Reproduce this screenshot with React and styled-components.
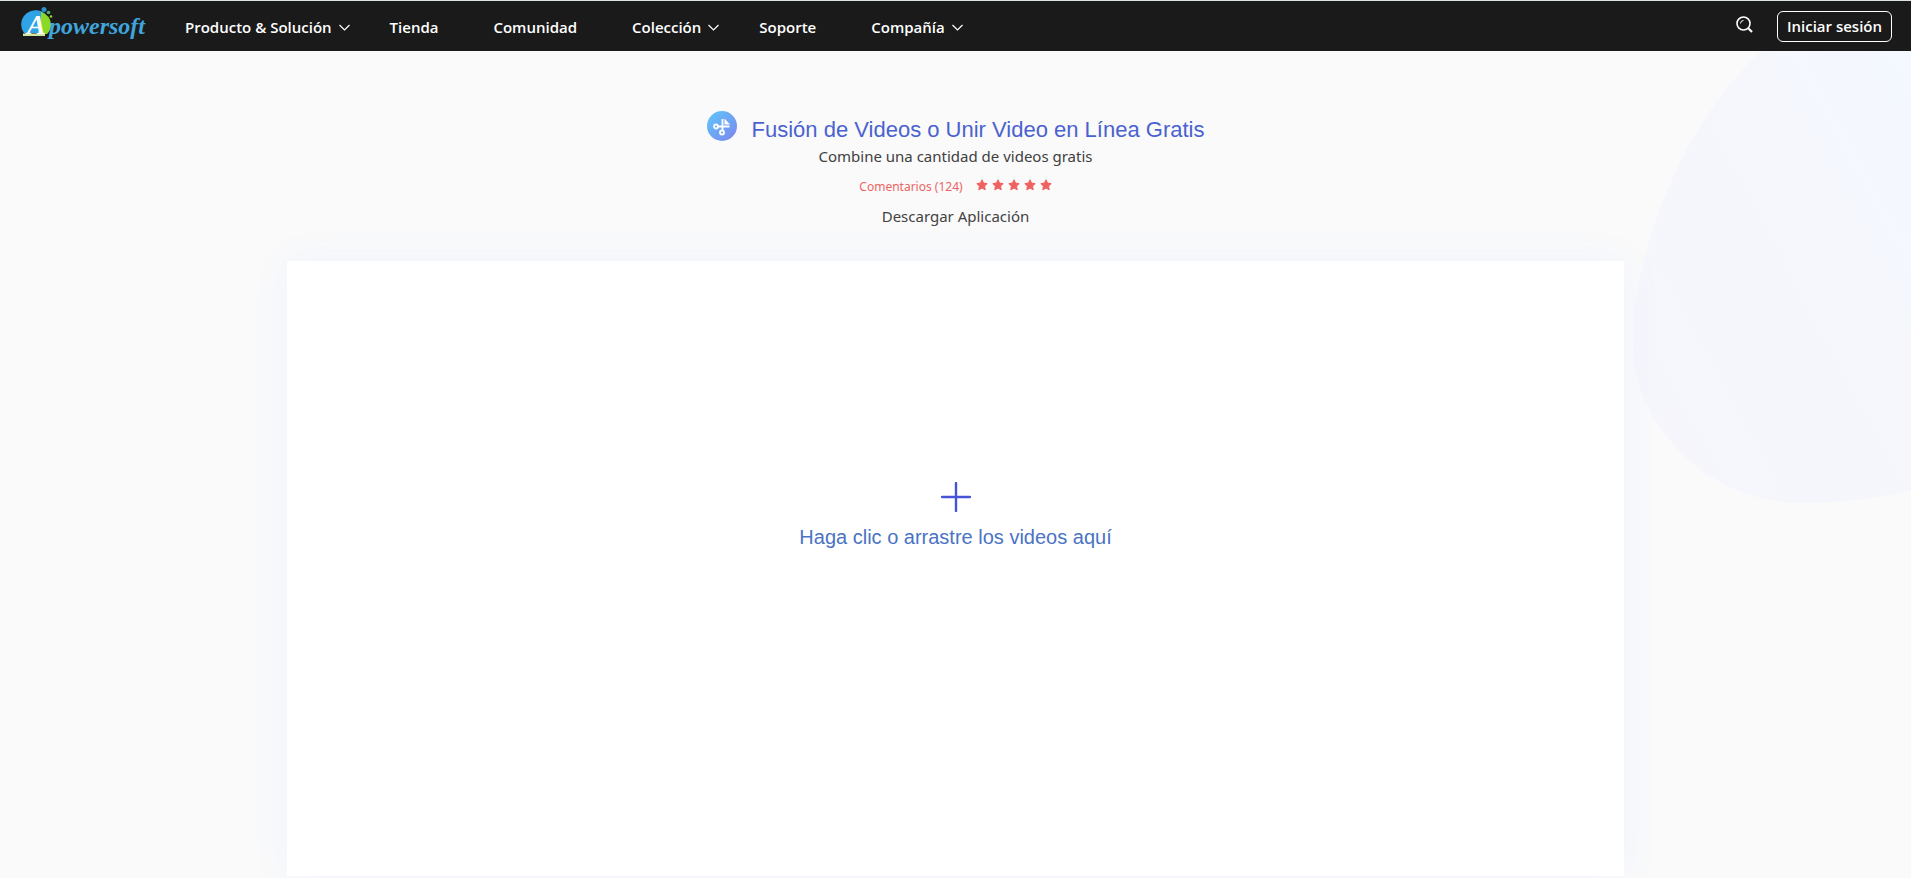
import React from 'react';
import styled, { createGlobalStyle } from 'styled-components';

const GlobalStyle = createGlobalStyle`
  *, *::before, *::after { box-sizing: border-box; }
  body {
    margin: 0;
    background: #fafafa;
    color: #404040;
    font-family: "Noto Sans", "Open Sans", sans-serif;
    font-size: 15px;
    overflow-x: hidden;
  }
`;

const Page = styled.div`
  position: relative;
  min-height: 100vh;
  overflow: hidden;
`;

const Header = styled.header`
  position: relative;
  z-index: 1;
  display: flex;
  align-items: center;
  height: 51px;
  padding: 0 19px 0 21px;
  border-top: 1px solid #dce4e1;
  background: #1a1a1a;
`;

const LogoLink = styled.a`
  display: flex;
  width: 128px;
  margin-right: 36px;
  color: #3fa5dc;
  text-decoration: none;
`;

const LogoArt = styled.svg`
  display: block;
  width: 128px;
  height: 40px;
  font-family: "Liberation Serif", serif;
  font-style: italic;
  font-weight: 700;
`;

const Nav = styled.nav`
  display: flex;
  flex: 1;
  gap: 55px;
  padding-top: 2px;
`;

const NavItem = styled.a`
  display: flex;
  align-items: center;
  gap: 7px;
  margin-right: ${(p) => (p.$menu ? '-15px' : '0')};
  color: #fff;
  font-family: "Open Sans", sans-serif;
  font-weight: 600;
  font-size: 15px;
  line-height: 24px;
  text-decoration: none;
  white-space: nowrap;
`;

const Chevron = styled.svg`
  width: 11px;
  height: 7px;
`;

const SearchButton = styled.button`
  display: flex;
  padding: 0;
  margin: 0 24px 4px 0;
  border: 0;
  background: none;
  color: #fff;
`;

const LoginButton = styled.button`
  height: 31px;
  padding: 0 9px;
  border: 1px solid #fff;
  border-radius: 6px;
  background: none;
  color: #fff;
  font-family: "Open Sans", sans-serif;
  font-weight: 600;
  font-size: 15px;
  line-height: 24px;
`;

const Backdrop = styled.svg`
  position: absolute;
  top: 0;
  right: 0;
  width: 280px;
  height: 510px;
`;

const Main = styled.main`
  position: relative;
  display: flex;
  flex-direction: column;
  align-items: center;
  padding-top: 60px;
`;

const TitleRow = styled.div`
  display: flex;
  gap: 15px;
`;

const Title = styled.h1`
  margin: 5px 0 0;
  color: #4a62d0;
  font-family: "Liberation Sans", Arial, sans-serif;
  font-weight: 400;
  font-size: 22px;
  line-height: 28px;
`;

const Subtitle = styled.p`
  margin: 0;
  font-size: 15px;
  line-height: 24px;
`;

const Reviews = styled.a`
  display: flex;
  align-items: center;
  gap: 13px;
  margin-top: 11px;
  color: #ec6464;
  font-size: 12px;
  line-height: 16px;
  text-decoration: none;
`;

const Stars = styled.span`
  display: flex;
  gap: 4px;
  margin-bottom: 4px;
`;

const DownloadLink = styled.a`
  margin-top: 9px;
  color: inherit;
  font-size: 15px;
  line-height: 24px;
  text-decoration: none;
`;

const DropZone = styled.button`
  display: flex;
  flex-direction: column;
  align-items: center;
  width: 70%;
  height: 70vh;
  margin: 33px 0;
  padding: 221px 0 0;
  border: 0;
  background: #fff;
  box-shadow: 0 0 40px #eff3ff;
  color: #4a73c4;
  font-family: "Liberation Sans", Arial, sans-serif;
  font-size: 20px;
  line-height: 24px;
`;

const DropLabel = styled.span`
  margin-top: 13px;
`;

const NAV = [
  { label: 'Producto & Solución', menu: true },
  { label: 'Tienda' },
  { label: 'Comunidad' },
  { label: 'Colección', menu: true },
  { label: 'Soporte' },
  { label: 'Compañía', menu: true },
];

function Logo() {
  return (
    <LogoArt viewBox="0 0 128 40" role="img" aria-label="Apowersoft">
      <path d="M3 27 A14 14 0 1 1 26 10 L20 27 Z" fill="#2fa3e6" />
      <path d="M20 6 Q29 9 30 18 Q30 24 26 28 H20 Z" fill="#8bd927" />
      <path d="M2 27.500 H24 V30 H2 Z" fill="#cfe6a0" />
      <circle cx="23" cy="3.500" r="2.500" fill="#2b91cf" />
      <circle cx="27.500" cy="6.500" r="1.800" fill="#4fb56e" />
      <circle cx="30" cy="10.500" r="1.300" fill="#8bd927" />
      <text x="6" y="28" fontSize="28" fill="#fff">A</text>
      <text x="28" y="28" fontSize="24" fill="#3fa5dc">powersoft</text>
    </LogoArt>
  );
}

function Star() {
  return (
    <svg width="12" height="12" viewBox="0 0 12 12" aria-hidden="true">
      <path d="M6 .8 7.600 4.100 11.200 4.600 8.600 7.100 9.200 10.800 6 9.100 2.800 10.800 3.400 7.100 .8 4.600 4.400 4.100Z" fill="#f06262" stroke="#f06262" strokeLinejoin="round" />
    </svg>
  );
}

export default function App() {
  return (
    <Page>
      <GlobalStyle />
      <Header>
        <LogoLink href="#"><Logo /></LogoLink>
        <Nav>
          {NAV.map(({ label, menu }) => (
            <NavItem key={label} href="#" $menu={menu}>
              {label}
              {menu && (
                <Chevron viewBox="0 0 11 7" aria-hidden="true">
                  <path d="M.5 1 5.500 6 10.500 1" fill="none" stroke="#fff" strokeWidth="1.200" />
                </Chevron>
              )}
            </NavItem>
          ))}
        </Nav>
        <SearchButton aria-label="Buscar">
          <svg width="17" height="17" viewBox="0 0 17 17" fill="none" stroke="currentColor">
            <circle cx="7.500" cy="7.500" r="6.500" strokeWidth="1.600" />
            <path d="M4.500 7.500 A3 3 0 0 1 7.500 4.500" />
            <path d="M12 12 16 16" strokeWidth="2.200" />
          </svg>
        </SearchButton>
        <LoginButton>Iniciar sesión</LoginButton>
      </Header>
      <Backdrop viewBox="0 0 280 510" aria-hidden="true">
        <defs>
          <linearGradient id="blob" x1="1" y1="0" x2="0" y2="1">
            <stop offset="0" stopColor="#f3f9ff" />
            <stop offset=".35" stopColor="#f5f7fd" />
            <stop offset="1" stopColor="#f6f5fc" />
          </linearGradient>
        </defs>
        <path d="M280 0 H182 L130 51 C80 98 46 160 25 220 C7 272 -6 330 8 387 C35 456 92 500 168 503 C210 504 246 498 280 490 Z" fill="url(#blob)" />
      </Backdrop>
      <Main>
        <TitleRow>
          <svg width="30" height="30" viewBox="0 0 30 30" aria-hidden="true">
            <defs>
              <linearGradient id="badge" x1="0" y1="0" x2="1" y2="1">
                <stop offset="0" stopColor="#5fc8fa" />
                <stop offset="1" stopColor="#7d84ee" />
              </linearGradient>
            </defs>
            <circle cx="15" cy="15" r="15" fill="url(#badge)" />
            <g fill="none" stroke="#fff" strokeWidth="1.800">
              <circle cx="9" cy="15.500" r="2" />
              <circle cx="15" cy="21.500" r="2" />
              <path d="M11 15.500 H22.500 M15.500 19.500 V8" />
            </g>
            <path d="M17.500 7.500 L23 13.500 H17.500 Z" fill="#fff" />
          </svg>
          <Title>Fusión de Videos o Unir Video en Línea Gratis</Title>
        </TitleRow>
        <Subtitle>Combine una cantidad de videos gratis</Subtitle>
        <Reviews href="#">
          Comentarios (124)
          <Stars>{[0, 1, 2, 3, 4].map((n) => <Star key={n} />)}</Stars>
        </Reviews>
        <DownloadLink href="#">Descargar Aplicación</DownloadLink>
        <DropZone>
          <svg width="30" height="30" viewBox="0 0 30 30" aria-hidden="true">
            <path d="M15 1 V29 M1 15 H29" stroke="#4553d8" strokeWidth="2.400" strokeLinecap="round" />
          </svg>
          <DropLabel>Haga clic o arrastre los videos aquí</DropLabel>
        </DropZone>
      </Main>
    </Page>
  );
}
